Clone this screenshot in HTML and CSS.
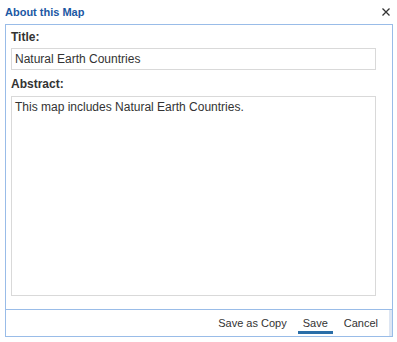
FILE: index.html
```html
<!DOCTYPE html>
<html lang="en">
<head>
    <meta charset="UTF-8">
    <meta name="viewport" content="width=device-width, initial-scale=1.0">
    <title>About this Map</title>
    <link rel="stylesheet" href="styles.css">
</head>
<body>
    <div class="dialog">
        <div class="dialog-header">
            <span class="dialog-title">About this Map</span>
            <button class="close-btn" title="Close">
                <svg width="8" height="8" viewBox="0 0 8 8">
                    <path d="M0.5 0.5 L7.5 7.5 M7.5 0.5 L0.5 7.5" stroke="#333" stroke-width="1.3" fill="none"/>
                </svg>
            </button>
        </div>
        <div class="dialog-panel">
            <div class="dialog-body">
                <label class="field-label" for="map-title">Title:</label>
                <input type="text" id="map-title" class="title-input" value="Natural Earth Countries">
                <label class="field-label abstract-label" for="map-abstract">Abstract:</label>
                <textarea id="map-abstract" class="abstract-input">This map includes Natural Earth Countries.</textarea>
            </div>
            <div class="dialog-footer">
                <div class="footer-buttons">
                    <button class="footer-btn">Save as Copy</button>
                    <button class="footer-btn active">Save</button>
                    <button class="footer-btn">Cancel</button>
                </div>
                <div class="footer-strip"></div>
            </div>
        </div>
    </div>
</body>
</html>
```

FILE: styles.css
```css
* {
    margin: 0;
    padding: 0;
    box-sizing: border-box;
}

body {
    font-family: 'Liberation Sans', Arial, sans-serif;
    background: #fff;
    color: #333;
}

.dialog {
    width: 397px;
    height: 342px;
}

.dialog-header {
    height: 24px;
    padding: 0 7px 0 5px;
    display: flex;
    justify-content: space-between;
    align-items: center;
}

.dialog-title {
    font-size: 11px;
    font-weight: bold;
    color: #1b58a3;
}

.close-btn {
    width: 8px;
    height: 8px;
    border: none;
    background: none;
    display: flex;
    cursor: pointer;
}

.dialog-panel {
    margin-left: 5px;
    width: 388px;
    height: 313px;
    border: 1px solid #99bce8;
    display: flex;
    flex-direction: column;
}

.dialog-body {
    flex: 1;
    padding: 5px 16px 0 5px;
    display: flex;
    flex-direction: column;
}

.field-label {
    font-size: 12px;
    line-height: 14px;
    font-weight: bold;
    color: #333;
    margin-bottom: 4px;
}

.abstract-label {
    margin-top: 7px;
    margin-bottom: 5px;
}

.title-input,
.abstract-input {
    width: 100%;
    border: 1px solid #d9d9d9;
    font-family: 'Liberation Sans', Arial, sans-serif;
    font-size: 12px;
    color: #333;
    outline: none;
}

.title-input {
    height: 22px;
    padding: 0 3px;
}

.abstract-input {
    height: 200px;
    padding: 3px;
    line-height: 14px;
    resize: none;
}

.dialog-footer {
    height: 27px;
    border-top: 1px solid #99bce8;
    display: flex;
    justify-content: flex-end;
}

.footer-buttons {
    display: flex;
    gap: 6px;
    padding-right: 6px;
}

.footer-btn {
    height: 24px;
    padding: 6px 5px 0;
    border: none;
    border-bottom: 3px solid transparent;
    background: none;
    font-family: 'Liberation Sans', Arial, sans-serif;
    font-size: 11px;
    line-height: 13px;
    color: #333;
    cursor: pointer;
}

.footer-btn.active {
    border-bottom-color: #2a6ea8;
}

.footer-strip {
    width: 3px;
    background: #dde6f3;
}
```
